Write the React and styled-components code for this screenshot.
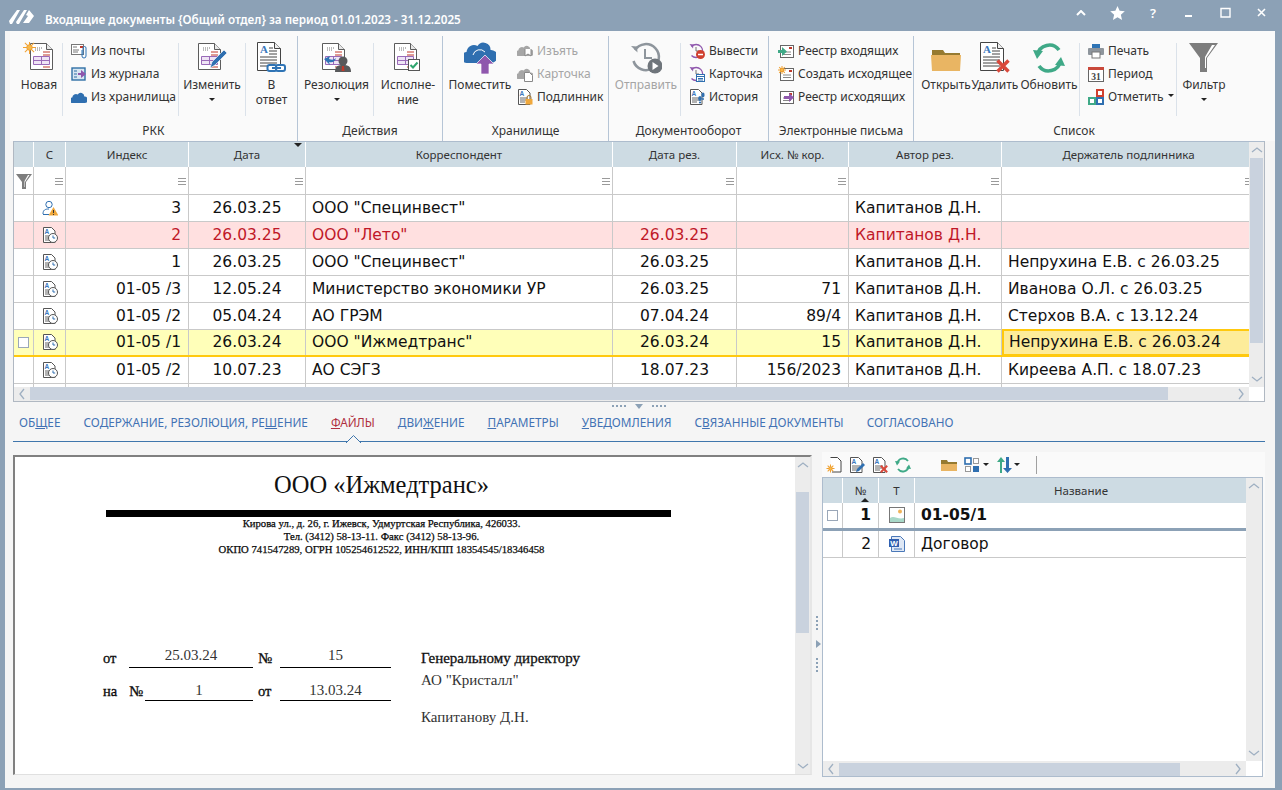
import styled, { createGlobalStyle } from "styled-components";

const Global = createGlobalStyle`
    html, body {
        margin: 0;
        padding: 0;
        background: #8ca1b6;
    }
    * {
        box-sizing: border-box;
    }
`;

const UI_FONT = `"Noto Sans", "Open Sans", sans-serif`;
const GRID_FONT = `"DejaVu Sans", sans-serif`;
const DOC_FONT = `"Liberation Serif", serif`;

/* ---------- icons ---------- */

const Svg = ({ s = 16, children }) => (
    <svg width={s} height={s} viewBox={`0 0 ${s} ${s}`} style={{ display: "block", flex: "none" }}>
        {children}
    </svg>
);

const Sun = ({ x, y, r = 6.5 }) => (
    <g transform={`translate(${x} ${y})`} stroke="#f0a030" strokeWidth="1">
        {[0, 45, 90, 135].map((a) => (
            <line key={a} x1={-r} x2={r} y1="0" y2="0" transform={`rotate(${a})`} />
        ))}
        <circle r={r * 0.42} fill="#f7b84a" stroke="#f0a030" />
    </g>
);

const FormDoc = ({ x = 7, y = 1 }) => (
    <g transform={`translate(${x} ${y})`}>
        <path d="M.5.5h16l6 6v20h-22z" fill="#fff" stroke="#5c5c5c" />
        <path d="M16.5.5v6h6" fill="#e8e8e8" stroke="#5c5c5c" />
        <path d="M5 5h8M5 7h5" stroke="#777" strokeDasharray="1 1" />
        <path d="M13 9h7M13 12h7" stroke="#c0392b" />
        <path d="M3.5 13.5h16v8h-16z" fill="#efe4f5" stroke="#9a6bb8" />
        <path d="M3.5 17.5h16M11.5 13.5v8" stroke="#9a6bb8" />
        <path d="M13 24h7" stroke="#c0392b" />
    </g>
);

const TextDoc = ({ x = 2, y = 1 }) => (
    <g transform={`translate(${x} ${y})`}>
        <path d="M.5.5h17l6 6v22h-23z" fill="#fff" stroke="#444" />
        <path d="M17.5.5v6h6" fill="#eee" stroke="#444" />
        <text x="3" y="11" fontSize="11" fontWeight="700" fontFamily="Liberation Serif" fill="#3a78bd">A</text>
        <path d="M12 6h4M12 9h8M12 12h8M3 15h17M3 18h17M3 21h17M3 24h17" stroke="#444" />
    </g>
);

const SmallA = () => (
    <g>
        <path d="M1.5.5h8l3.5 3.5v11.5h-11.5z" fill="#fff" stroke="#555" />
        <text x="2.5" y="6.5" fontSize="6.5" fontWeight="700" fontFamily="Liberation Sans" fill="#3a78bd">A</text>
        <path d="M3 9h8M3 11h8M3 13h5" stroke="#666" />
    </g>
);

const Cross = ({ x, y, s = 6 }) => (
    <path
        d={`M${x - s} ${y - s}L${x + s} ${y + s}M${x + s} ${y - s}L${x - s} ${y + s}`}
        stroke="#d9483b"
        strokeWidth={s * 0.62}
    />
);

const NewDocIcon = () => (
    <Svg s={32}>
        <FormDoc />
        <Sun x={6.5} y={5.5} />
    </Svg>
);

const EditIcon = () => (
    <Svg s={32}>
        <FormDoc x={2} y={1} />
        <path d="M14 26l2-6L28 8l3 3-12 12z" fill="#2f6fb0" stroke="#fff" strokeWidth=".6" />
    </Svg>
);

const ReplyIcon = () => (
    <Svg s={32}>
        <TextDoc x={1} y={0} />
        <rect x="11.5" y="23" width="9" height="6" rx="2" fill="#fff" stroke="#2f74b5" strokeWidth="2" />
        <rect x="20" y="23" width="9" height="6" rx="2" fill="#fff" stroke="#2f74b5" strokeWidth="2" />
        <path d="M16 26h9" stroke="#2f74b5" strokeWidth="2" />
    </Svg>
);

const ResolutionIcon = () => (
    <Svg s={32}>
        <FormDoc x={1} y={1} />
        <path d="M3 17l6-3-1 3c3 1 5 1 7-1-1 4-4 5-7 4l1 3z" fill="#2f74b5" />
        <circle cx="22" cy="19" r="4.5" fill="#58595b" />
        <path d="M14 30c0-6 3-7 8-7s8 1 8 7z" fill="#58595b" />
        <path d="M21 24h2l.5 5h-3z" fill="#c0392b" />
    </Svg>
);

const ExecIcon = () => (
    <Svg s={32}>
        <FormDoc x={2} y={1} />
        <rect x="16.5" y="17.5" width="11" height="11" fill="#fff" stroke="#555" />
        <path d="M18.5 23l2.5 2.5 4.5-5" fill="none" stroke="#2fa56f" strokeWidth="2" />
    </Svg>
);

const CloudShape = ({ fill }) => (
    <path
        d="M3 28a5.5 5.5 0 0 1-.5-11 7.5 7.5 0 0 1 11-6 7 7 0 0 1 13 4 6 6 0 0 1 1 13z"
        fill={fill}
    />
);

const PutIcon = () => (
    <Svg s={32}>
        <g transform="translate(0 -7)">
            <CloudShape fill="#2f6fb0" />
        </g>
        <path d="M9 13a7 7 0 0 1 12-3" fill="none" stroke="#fff" />
        <path d="M17 32V22h-5l9-9 9 9h-5v10z" fill="#8f57ad" stroke="#fff" strokeWidth=".7" />
    </Svg>
);

const ClockBigIcon = () => (
    <Svg s={32}>
        <path d="M5 8a13 13 0 1 1-1.5 11" fill="none" stroke="#8e959c" strokeWidth="2.5" />
        <path d="M1 4l6 .5.5 6z" fill="#8e959c" />
        <path d="M15 7v9h7" fill="none" stroke="#8e959c" strokeWidth="2" />
        <circle cx="25" cy="24" r="7.5" fill="#6f757b" />
        <path d="M22.5 20l6 4-6 4z" fill="#fff" />
    </Svg>
);

const FolderIcon = () => (
    <Svg s={32}>
        <path d="M2 8h11l2 3h15v6H2z" fill="#967a30" />
        <path d="M1 13h30l-1 16H2z" fill="#e9b563" />
    </Svg>
);

const DeleteIcon = () => (
    <Svg s={32}>
        <TextDoc x={1} y={0} />
        <Cross x={24} y={24} s={5.5} />
    </Svg>
);

const RefreshIcon = ({ s = 32 }) => (
    <svg width={s} height={s} viewBox="0 0 32 32" style={{ display: "block", flex: "none" }}>
        <path d="M4.5 13A12 12 0 0 1 26 8" fill="none" stroke="#3fa987" strokeWidth="3.6" />
        <path d="M27.5 19A12 12 0 0 1 6 24" fill="none" stroke="#3fa987" strokeWidth="3.6" />
        <path d="M0 8l10 1-6 8z" fill="#3fa987" />
        <path d="M32 24l-10-1 6-8z" fill="#3fa987" />
    </svg>
);

const FunnelIcon = () => (
    <Svg s={32}>
        <path d="M1 1h29L19 16v14h-7V16z" fill="#7d7d7d" />
        <path d="M24 3h3L18 16v10h-1V15z" fill="#fff" />
    </Svg>
);

const MailIcon = () => (
    <Svg>
        <rect x=".5" y="1.5" width="12" height="10" fill="#fff" stroke="#777" />
        <path d="M2 4h4M2 7h6M2 9h5" stroke="#777" />
        <rect x="9" y="3" width="3" height="2" fill="#c0392b" />
        <path d="M11 7v6a2 2 0 0 0 4 0V5a1.5 1.5 0 0 0-3 0v7" fill="none" stroke="#2f74b5" />
    </Svg>
);

const JournalIcon = () => (
    <Svg>
        <rect x="1" y="2" width="13" height="12" fill="#d7e6f2" stroke="#2f6fa5" strokeWidth="1.4" />
        <path d="M3 5h3M3 8h3M3 11h3" stroke="#2f6fa5" />
        <path d="M7 7h3V4l5 4-5 4V9H7z" fill="#8f57ad" />
    </Svg>
);

const CloudIcon = ({ fill = "#2f6fb0" }) => (
    <svg width="16" height="16" viewBox="0 0 32 32" style={{ display: "block", flex: "none" }}>
        <CloudShape fill={fill} />
    </svg>
);

const CloudBadgeIcon = ({ children }) => (
    <Svg>
        <g transform="scale(.5) translate(0 -2)">
            <CloudShape fill="#a6a6a6" />
        </g>
        {children}
    </Svg>
);

const LockDocIcon = () => (
    <Svg>
        <SmallA />
        <rect x="8.5" y="10" width="7" height="5.5" fill="#f0a83c" />
        <path d="M10 10V8.5a2 2 0 0 1 4 0V10" fill="none" stroke="#a87a30" />
    </Svg>
);

const HistoryArc = () => (
    <g>
        <path d="M2.5 3.5a6.5 6.5 0 1 1 0 9" fill="none" stroke="#8f57ad" strokeWidth="1.3" />
        <path d="M.5 1l4 .5-.5 4z" fill="#8f57ad" />
        <path d="M7 4v4h3" fill="none" stroke="#777" />
    </g>
);

const WithdrawIcon = () => (
    <Svg>
        <HistoryArc />
        <circle cx="11.5" cy="11.5" r="4.5" fill="#d0402f" />
        <path d="M9 11.5h5" stroke="#fff" strokeWidth="1.5" />
    </Svg>
);

const HistoryCardIcon = () => (
    <Svg>
        <HistoryArc />
        <rect x="7.5" y="8.5" width="8" height="7" fill="#fff" stroke="#2f6fb0" />
        <path d="M7.5 10.5h8M9 12.5h5M9 14h5" stroke="#2f6fb0" />
    </Svg>
);

const StepsIcon = () => (
    <Svg>
        <SmallA />
        <ellipse cx="11" cy="9.5" rx="1.8" ry="2.6" fill="#2f6fb0" />
        <ellipse cx="14" cy="6" rx="1.6" ry="2.4" fill="#2f6fb0" />
        <circle cx="11" cy="13.5" r="1.1" fill="#2f6fb0" />
        <circle cx="14" cy="10" r="1" fill="#2f6fb0" />
    </Svg>
);

const MailBase = () => (
    <g>
        <rect x="2.5" y="2.5" width="13" height="12" fill="#fff" stroke="#666" />
        <rect x="11" y="4" width="3" height="2" fill="#c0392b" />
        <path d="M5 9h8M5 11.5h8" stroke="#888" />
    </g>
);

const InboxIcon = () => (
    <Svg>
        <MailBase />
        <path d="M0 7h4V4l5 4.5L4 13v-3H0z" fill="#3fa987" />
    </Svg>
);

const CreateMailIcon = () => (
    <Svg>
        <MailBase />
        <Sun x={4} y={4} r={4} />
    </Svg>
);

const OutboxIcon = () => (
    <Svg>
        <MailBase />
        <path d="M6 7h5V4l5 4.5L11 13v-3H6z" fill="#8f57ad" />
    </Svg>
);

const PrintIcon = () => (
    <Svg>
        <rect x="4" y="1" width="8" height="4" fill="#2f74b5" />
        <rect x="0" y="5" width="16" height="7" rx="1" fill="#8e959c" />
        <rect x="4" y="9" width="8" height="6" fill="#fff" stroke="#777" />
    </Svg>
);

const CalendarIcon = () => (
    <Svg>
        <rect x=".5" y="2.5" width="15" height="13" fill="#fff" stroke="#666" />
        <rect x="0" y="1" width="16" height="3" fill="#c9483a" />
        <text x="8" y="14" textAnchor="middle" fontSize="9.5" fontWeight="700" fontFamily="Liberation Serif" fill="#444">31</text>
    </Svg>
);

const MarkIcon = () => (
    <Svg>
        <rect x="9" y="1" width="6" height="6" fill="#fff" stroke="#d0402f" strokeWidth="2" />
        <rect x="1" y="9" width="6" height="6" fill="#fff" stroke="#3fa987" strokeWidth="2" />
        <rect x="9" y="9" width="6" height="6" fill="#fff" stroke="#2f6fb0" strokeWidth="2" />
    </Svg>
);

const DocClockIcon = () => (
    <Svg>
        <SmallA />
        <circle cx="11" cy="11" r="4.5" fill="#fff" stroke="#555" />
        <path d="M11 8.5V11h2.2" fill="none" stroke="#2f6fb0" />
    </Svg>
);

const PersonWarnIcon = () => (
    <Svg>
        <circle cx="7" cy="4.5" r="3.2" fill="#fff" stroke="#2f6fb0" />
        <path d="M1 14c0-4 2-5 6-5" fill="none" stroke="#2f6fb0" />
        <path d="M1 14.5h6" stroke="#2f6fb0" />
        <path d="M11.5 7l5 8.5h-10z" fill="#f0a83c" />
        <path d="M11.5 10v3M11.5 14v1" stroke="#333" />
    </Svg>
);

const ImageFileIcon = () => (
    <Svg>
        <rect x=".5" y=".5" width="15" height="15" fill="#fff" stroke="#777" />
        <path d="M1 15v-4c4-3 8 2 14 0v4z" fill="#a8d8c8" />
        <circle cx="11" cy="4.5" r="2" fill="#f0b45a" />
    </Svg>
);

const WordFileIcon = () => (
    <Svg>
        <path d="M2.5.5h9l4 4v11h-13z" fill="#dfe8f5" stroke="#4a78b8" />
        <rect x="0" y="3" width="10" height="8" fill="#2f5fb0" />
        <text x="5" y="10" textAnchor="middle" fontSize="8" fontWeight="700" fontFamily="Liberation Sans" fill="#fff">W</text>
        <path d="M5 13h8" stroke="#4a78b8" />
    </Svg>
);

const TbNewIcon = () => (
    <Svg>
        <path d="M4.5.5h7l3.5 3.5v11H6" fill="#fff" stroke="#444" />
        <Sun x={4.5} y={11.5} r={4} />
    </Svg>
);

const TbEditIcon = () => (
    <Svg>
        <SmallA />
        <path d="M7 15l1-3 6-6 2 2-6 6z" fill="#2f6fb0" />
    </Svg>
);

const TbDeleteIcon = () => (
    <Svg>
        <SmallA />
        <Cross x={12} y={12} s={3.2} />
    </Svg>
);

const TbFolderIcon = () => (
    <Svg>
        <path d="M0 3h6l1 2h9v3H0z" fill="#967a30" />
        <path d="M0 7h16v7H0z" fill="#e9b563" />
    </Svg>
);

const TbGridIcon = () => (
    <Svg>
        <rect x="1" y="1" width="6" height="6" fill="#fff" stroke="#2f6fb0" strokeWidth="1.6" />
        <rect x="9.5" y="1.5" width="5" height="5" fill="#fff" stroke="#999" />
        <rect x="1.5" y="9.5" width="5" height="5" fill="#fff" stroke="#999" />
        <rect x="9" y="9" width="6" height="6" fill="#2f6fb0" />
    </Svg>
);

const TbSortIcon = () => (
    <Svg>
        <path d="M4 16V5H1l4-5 4 5H6v11z" fill="#3fa987" />
        <path d="M10 0v11H7l4.500 5 4.500-5h-3V0z" fill="#2f6fb0" />
    </Svg>
);

const SmallFunnel = () => (
    <Svg>
        <path d="M0 1h16L10 9v7H6V9z" fill="#7d7d7d" />
        <path d="M12 2h1.500L9 9v5H8.500V8z" fill="#fff" />
    </Svg>
);

/* ---------- window ---------- */

const Window = styled.div`
    width: 1282px;
    height: 790px;
    overflow: hidden;
    background: #8ca1b6;
    display: flex;
    flex-direction: column;
    font-family: ${UI_FONT};
`;

const TitleBar = styled.div`
    height: 31px;
    flex: none;
    display: flex;
    align-items: center;
    padding: 7px 3px 0 9px;
    color: #fff;
`;

const Title = styled.div`
    margin-left: 11px;
    font-size: 11.7px;
    font-weight: 600;
    flex: 1;
    white-space: nowrap;
`;

const WinButton = styled.div`
    width: 36px;
    height: 24px;
    margin-top: -13px;
    display: flex;
    align-items: center;
    justify-content: center;
    color: #fff;
    font-size: 13px;
    font-weight: 600;
`;

const Body = styled.div`
    width: 1270px;
    height: 757px;
    margin-left: 5px;
    background: #f5f5f5;
    display: flex;
    flex-direction: column;
`;

/* ---------- ribbon ---------- */

const Ribbon = styled.div`
    height: 110px;
    flex: none;
    margin-left: 5px;
    padding-top: 5px;
    background: #fafafa;
    display: flex;
    align-items: flex-start;
`;

const Group = styled.div`
    width: ${(p) => p.$w}px;
    height: 105px;
    flex: none;
    display: flex;
    flex-direction: column;
    border-right: ${(p) => (p.$last ? "none" : "1px solid #b6c5d6")};
`;

const GroupItems = styled.div`
    height: 85px;
    display: flex;
    align-items: flex-start;
    padding-left: ${(p) => p.$pad || 0}px;
`;

const GroupLabel = styled.div`
    height: 20px;
    line-height: 19px;
    text-align: center;
    font-size: 12px;
    color: #333;
`;

const InnerSep = styled.div`
    width: 1px;
    height: 73px;
    margin-top: 7px;
    flex: none;
    background: #dbe2ea;
`;

const LargeBtn = styled.div`
    width: ${(p) => p.$w}px;
    flex: none;
    padding-top: 6px;
    display: flex;
    flex-direction: column;
    align-items: center;
    font-size: 12px;
    line-height: 15px;
    text-align: center;
    color: ${(p) => (p.$off ? "#a5a5a5" : "#333")};
    white-space: pre-line;
`;

const LargeLabel = styled.div`
    margin-top: 3px;
`;

const Caret = styled.div`
    width: 0;
    height: 0;
    border-left: 3px solid transparent;
    border-right: 3px solid transparent;
    border-top: 3px solid #222;
    margin: ${(p) => p.$m || "6px 0 0"};
    flex: none;
`;

const SmallCol = styled.div`
    width: ${(p) => p.$w}px;
    flex: none;
    padding: 3px 0 0 ${(p) => p.$pad || 0}px;
    display: flex;
    flex-direction: column;
`;

const SmallBtn = styled.div`
    height: 23px;
    display: flex;
    align-items: center;
    gap: 4px;
    font-size: 12px;
    color: ${(p) => (p.$off ? "#a5a5a5" : "#333")};
    white-space: nowrap;
`;

/* ---------- grid ---------- */

const Workspace = styled.div`
    flex: 1;
    padding: 0 10px 0 8px;
    display: flex;
    flex-direction: column;
`;

const MainGrid = styled.div`
    height: 261px;
    flex: none;
    border: 1px solid #adbccd;
    border-color: #adbccd #b0b8c2 #b0b8c2 #b0b8c2;
    background: #fff;
    display: flex;
`;

const GridArea = styled.div`
    width: ${(p) => p.$w}px;
    flex: none;
    display: flex;
    flex-direction: column;
    overflow: hidden;
`;

const GridRows = styled.div`
    flex: 1;
    min-height: 0;
    overflow: hidden;
`;

const Row = styled.div`
    display: flex;
    height: ${(p) => p.$h || 27}px;
    width: 1300px;
    background: ${(p) => p.$bg || "#fff"};
    color: ${(p) => p.$color || "#111"};
    font-family: ${GRID_FONT};
    font-size: 15.5px;
    border-bottom: ${(p) => p.$line || "1px solid #c9c9c9"};
`;

const Cell = styled.div`
    width: ${(p) => p.$w}px;
    flex: none;
    height: ${(p) => (p.$active ? "calc(100% + 2px)" : "100%")};
    border-right: 1px solid #c9c9c9;
    padding: 0 ${(p) => (p.$a === "right" ? 7 : 6)}px;
    padding-bottom: 1px;
    display: flex;
    align-items: center;
    white-space: nowrap;
    overflow: hidden;
    justify-content: ${(p) =>
        p.$a === "right" ? "flex-end" : p.$a === "center" ? "center" : "flex-start"};
    font-weight: ${(p) => (p.$bold ? 700 : 400)};
    ${(p) => p.$active && "background: #fdec9a; border: 2px solid #ffc90e; padding-left: 5px; margin-top: -1px;"}
`;

const HeaderRow = styled.div`
    display: flex;
    height: 25px;
    width: 1300px;
    flex: none;
    background: #cddbe3;
`;

const HeaderCell = styled.div`
    width: ${(p) => p.$w}px;
    flex: none;
    position: relative;
    border-right: 1px solid #fff;
    display: flex;
    align-items: center;
    justify-content: center;
    font-size: 11.5px;
    color: #333;
`;

const SortMark = styled.div`
    position: absolute;
    right: 3px;
    ${(p) => (p.$up ? "bottom: 1px; border-bottom: 4px solid #222;" : "top: 1px; border-top: 4px solid #222;")}
    ${(p) => p.$up && "right: 9px;"}
    border-left: 4px solid transparent;
    border-right: 4px solid transparent;
`;

const FilterMenu = styled.div`
    position: absolute;
    right: 2px;
    top: 11px;
    width: 8px;
    height: 7px;
    border-top: 1px solid #9a9a9a;
    border-bottom: 1px solid #9a9a9a;
    &::after {
        content: "";
        display: block;
        height: 1px;
        margin-top: 2px;
        background: #9a9a9a;
    }
`;

const FilterCell = styled(Cell)`
    position: relative;
    padding: 0;
    justify-content: center;
`;

const CheckBox = styled.div`
    width: 11px;
    height: 11px;
    border: 1px solid #9aa7b8;
    background: #fff;
`;

const HScroll = styled.div`
    height: ${(p) => p.$h || 14}px;
    flex: none;
    background: #ececec;
    display: flex;
    align-items: stretch;
`;

const ArrowBox = styled.div`
    width: ${(p) => p.$w || 16}px;
    height: ${(p) => p.$h || "auto"};
    flex: none;
    display: flex;
    align-items: center;
    justify-content: center;
`;

const HThumb = styled.div`
    width: ${(p) => p.$w}px;
    flex: none;
    margin-bottom: ${(p) => p.$mb || 0}px;
    margin-top: ${(p) => p.$mt || 0}px;
    background: #c9d2de;
`;

const Filler = styled.div`
    flex: 1;
`;

const VScroll = styled.div`
    width: ${(p) => p.$w || 15}px;
    flex: none;
    display: flex;
    flex-direction: column;
    background: ${(p) => p.$bg || "#fff"};
`;

const VTrack = styled.div`
    flex: 1;
    min-height: 0;
    background: #ececec;
    display: flex;
    flex-direction: column;
    align-items: center;
`;

const VThumb = styled.div`
    width: 13px;
    height: ${(p) => p.$h}px;
    flex: none;
    margin-top: ${(p) => p.$top || 0}px;
    background: #c9d2de;
`;

const Corner = styled.div`
    height: ${(p) => p.$h}px;
    flex: none;
    background: #fff;
`;

const Chevron = ({ dir }) => {
    const d = {
        up: "M1 6l5-4 5 4",
        down: "M1 2l5 4 5-4",
        left: "M6 1L2 6l4 5",
        right: "M2 1l4 5-4 5",
    }[dir];
    const horizontal = dir === "left" || dir === "right";
    return (
        <svg width={horizontal ? 8 : 12} height={horizontal ? 12 : 8} viewBox={horizontal ? "0 0 8 12" : "0 0 12 8"}>
            <path d={d} fill="none" stroke="#9fb0c2" strokeWidth="1.3" />
        </svg>
    );
};

/* ---------- splitters, tabs ---------- */

const HSplitter = styled.div`
    height: 8px;
    flex: none;
    display: flex;
    align-items: center;
    justify-content: center;
    gap: 9px;
`;

const Dots = styled.div`
    display: flex;
    flex-direction: ${(p) => (p.$v ? "column" : "row")};
    gap: 2px;
`;

const Dot = styled.div`
    width: 2px;
    height: 2px;
    background: #8ca1b6;
`;

const DownArrow = styled.div`
    border-left: 4px solid transparent;
    border-right: 4px solid transparent;
    border-top: 5px solid #8ca1b6;
`;

const RightArrow = styled.div`
    border-top: 4px solid transparent;
    border-bottom: 4px solid transparent;
    border-left: 5px solid #8ca1b6;
`;

const Tabs = styled.div`
    height: 32px;
    flex: none;
    position: relative;
    display: flex;
    gap: 23px;
    padding: 4px 0 0 6px;
    border-bottom: 1px solid #3f76ac;
`;

const Tab = styled.div`
    font-size: 11.8px;
    line-height: 17px;
    white-space: nowrap;
    position: relative;
    color: ${(p) => (p.$on ? "#b03040" : "#4272b4")};
    u {
        text-decoration-thickness: 1px;
    }
`;

const Notch = styled.div`
    position: absolute;
    left: 50%;
    margin-left: -7px;
    top: 21px;
    width: 15px;
    height: 8px;
    svg {
        display: block;
    }
`;

/* ---------- lower part ---------- */

const Lower = styled.div`
    height: 325px;
    margin-top: 10px;
    flex: none;
    display: flex;
    align-items: flex-start;
`;

const Preview = styled.div`
    width: 799px;
    height: 320px;
    margin-top: 3px;
    flex: none;
    display: flex;
    background: #fff;
    border-top: 2px solid #808080;
    border-left: 2px solid #808080;
    border-right: 2px solid #e6e6e6;
    border-bottom: 1px solid #e0e0e0;
`;

const Page = styled.div`
    flex: 1;
    overflow: hidden;
    padding: 14px 0 0 91px;
    font-family: ${DOC_FONT};
    color: #111;
`;

const Sheet = styled.div`
    width: 565px;
`;

const Company = styled.div`
    font-size: 24.5px;
    line-height: 28px;
    text-align: center;
    padding-right: 14px;
    white-space: nowrap;
`;

const BlackBar = styled.div`
    height: 7px;
    margin-top: 11px;
    background: #000;
`;

const Address = styled.div`
    padding-right: 14px;
    font-size: 10.7px;
    line-height: 13px;
    text-align: center;
    white-space: nowrap;
    -webkit-text-stroke: 0.25px #000;
`;

const FormArea = styled.div`
    margin: 79px 0 0 -3px;
    display: flex;
`;

const FormFields = styled.div`
    display: flex;
    flex-direction: column;
    flex: none;
`;

const FormRow = styled.div`
    height: 33px;
    display: flex;
    align-items: flex-end;
`;

const FormLabel = styled.div`
    width: ${(p) => p.$w}px;
    flex: none;
    font-size: 14.5px;
    line-height: 20px;
    padding-bottom: ${(p) => (p.$low ? 0 : 0)}px;
    -webkit-text-stroke: 0.3px #000;
`;

const FormValue = styled.div`
    width: ${(p) => p.$w}px;
    margin-right: ${(p) => p.$mr || 0}px;
    flex: none;
    border-bottom: 1px solid #000;
    text-align: center;
    font-size: 15px;
    line-height: ${(p) => p.$lh || 20}px;
    padding-bottom: ${(p) => p.$pb || 0}px;
    color: #333;
`;

const Addressee = styled.div`
    margin: 12px 0 0 30px;
    font-size: 15px;
    line-height: 22px;
    color: #333;
    white-space: nowrap;
`;

const AddresseeTitle = styled.div`
    color: #111;
    -webkit-text-stroke: 0.3px #111;
`;

const AddresseeName = styled.div`
    margin-top: 15px;
`;

const VSplitter = styled.div`
    width: 10px;
    flex: none;
    padding: 164px 0 0 4px;
    display: flex;
    flex-direction: column;
    align-items: flex-start;
    gap: 10px;
`;

const RightPanel = styled.div`
    flex: 1;
    min-width: 0;
    height: 325px;
    background: #fafafa;
    display: flex;
    flex-direction: column;
`;

const Toolbar = styled.div`
    height: 25px;
    flex: none;
    display: flex;
    align-items: center;
    padding-left: 4px;
`;

const ToolIcon = styled.div`
    margin-right: ${(p) => p.$mr ?? 8}px;
    display: flex;
    align-items: center;
`;

const ToolSep = styled.div`
    width: 1px;
    height: 18px;
    background: #a0a0a0;
    margin-left: 9px;
`;

const FilesGrid = styled.div`
    width: 441px;
    height: 300px;
    flex: none;
    border: 1px solid #adbccd;
    background: #fff;
    display: flex;
`;

const FileRow = styled(Row)`
    width: 100%;
    height: ${(p) => p.$h}px;
`;

const RowsFill = styled.div`
    flex: 1;
    background: #fff;
`;

const columns = [
    { w: 20 },
    { w: 32, title: "С", a: "center" },
    { w: 123, title: "Индекс", a: "right" },
    { w: 117, title: "Дата", a: "center" },
    { w: 307, title: "Корреспондент" },
    { w: 124, title: "Дата рез.", a: "center" },
    { w: 112, title: "Исх. № кор.", a: "right" },
    { w: 153, title: "Автор рез." },
    { w: 254, title: "Держатель подлинника" },
];

const rows = [
    { warn: true, cells: ["3", "26.03.25", 'ООО "Специнвест"', "", "", "Капитанов Д.Н.", ""] },
    { pink: true, cells: ["2", "26.03.25", 'ООО "Лето"', "26.03.25", "", "Капитанов Д.Н.", ""] },
    { cells: ["1", "26.03.25", 'ООО "Специнвест"', "26.03.25", "", "Капитанов Д.Н.", "Непрухина Е.В. с 26.03.25"] },
    { cells: ["01-05 /3", "12.05.24", "Министерство экономики УР", "26.03.25", "71", "Капитанов Д.Н.", "Иванова О.Л. с 26.03.25"] },
    { cells: ["01-05 /2", "05.04.24", "АО ГРЭМ", "07.04.24", "89/4", "Капитанов Д.Н.", "Стерхов В.А. с 13.12.24"] },
    { active: true, cells: ["01-05 /1", "26.03.24", 'ООО "Ижмедтранс"', "26.03.24", "15", "Капитанов Д.Н.", "Непрухина Е.В. с 26.03.24"] },
    { cells: ["01-05 /2", "10.07.23", "АО СЭГЗ", "18.07.23", "156/2023", "Капитанов Д.Н.", "Киреева А.П. с 18.07.23"] },
];

const tabs = [
    ["ОБ", "Щ", "ЕЕ"],
    ["СОДЕРЖАНИЕ, РЕЗОЛЮЦИЯ, РЕ", "Ш", "ЕНИЕ"],
    ["", "Ф", "АЙЛЫ"],
    ["ДВИ", "Ж", "ЕНИЕ"],
    ["", "П", "АРАМЕТРЫ"],
    ["", "У", "ВЕДОМЛЕНИЯ"],
    ["С", "В", "ЯЗАННЫЕ ДОКУМЕНТЫ"],
    ["СОГЛАСОВАНО", "", ""],
];

const Large = ({ w, icon, label, off, caret }) => (
    <LargeBtn $w={w} $off={off}>
        {icon}
        <LargeLabel>{label}</LargeLabel>
        {caret && <Caret />}
    </LargeBtn>
);

const Small = ({ icon, label, off, caret }) => (
    <SmallBtn $off={off}>
        {icon}
        {label}
        {caret && <Caret $m="-3px 0 0" />}
    </SmallBtn>
);

function MainRibbon() {
    return (
        <Ribbon>
            <Group $w={288}>
                <GroupItems $pad={6}>
                    <Large w={46} icon={<NewDocIcon />} label="Новая" />
                    <InnerSep />
                    <SmallCol $w={115} $pad={8}>
                        <Small icon={<MailIcon />} label="Из почты" />
                        <Small icon={<JournalIcon />} label="Из журнала" />
                        <Small icon={<CloudIcon />} label="Из хранилища" />
                    </SmallCol>
                    <InnerSep />
                    <Large w={66} icon={<EditIcon />} label="Изменить" caret />
                    <InnerSep />
                    <Large w={51} icon={<ReplyIcon />} label={"В\nответ"} />
                </GroupItems>
                <GroupLabel>РКК</GroupLabel>
            </Group>
            <Group $w={145}>
                <GroupItems $pad={2}>
                    <Large w={73} icon={<ResolutionIcon />} label="Резолюция" caret />
                    <InnerSep />
                    <Large w={68} icon={<ExecIcon />} label={"Исполне-\nние"} />
                </GroupItems>
                <GroupLabel>Действия</GroupLabel>
            </Group>
            <Group $w={166}>
                <GroupItems>
                    <Large w={74} icon={<PutIcon />} label="Поместить" />
                    <SmallCol $w={90}>
                        <Small
                            off
                            icon={
                                <CloudBadgeIcon>
                                    <path d="M8 6v7l3-2 3 2V6" fill="#fff" stroke="#888" />
                                </CloudBadgeIcon>
                            }
                            label="Изъять"
                        />
                        <Small
                            off
                            icon={
                                <CloudBadgeIcon>
                                    <path d="M7.500 6.500h5l3 3v6h-8z" fill="#fff" stroke="#888" />
                                </CloudBadgeIcon>
                            }
                            label="Карточка"
                        />
                        <Small icon={<LockDocIcon />} label="Подлинник" />
                    </SmallCol>
                </GroupItems>
                <GroupLabel>Хранилище</GroupLabel>
            </Group>
            <Group $w={160}>
                <GroupItems $pad={3}>
                    <Large w={68} off icon={<ClockBigIcon />} label="Отправить" />
                    <InnerSep />
                    <SmallCol $w={80} $pad={8}>
                        <Small icon={<WithdrawIcon />} label="Вывести" />
                        <Small icon={<HistoryCardIcon />} label="Карточка" />
                        <Small icon={<StepsIcon />} label="История" />
                    </SmallCol>
                </GroupItems>
                <GroupLabel>Документооборот</GroupLabel>
            </Group>
            <Group $w={145}>
                <GroupItems $pad={9}>
                    <SmallCol $w={134}>
                        <Small icon={<InboxIcon />} label="Реестр входящих" />
                        <Small icon={<CreateMailIcon />} label="Создать исходящее" />
                        <Small icon={<OutboxIcon />} label="Реестр исходящих" />
                    </SmallCol>
                </GroupItems>
                <GroupLabel>Электронные письма</GroupLabel>
            </Group>
            <Group $w={320} $last>
                <GroupItems $pad={7}>
                    <Large w={50} icon={<FolderIcon />} label="Открыть" />
                    <Large w={48} icon={<DeleteIcon />} label="Удалить" />
                    <Large w={60} icon={<RefreshIcon />} label="Обновить" />
                    <InnerSep />
                    <SmallCol $w={96} $pad={8}>
                        <Small icon={<PrintIcon />} label="Печать" />
                        <Small icon={<CalendarIcon />} label="Период" />
                        <Small icon={<MarkIcon />} label="Отметить" caret />
                    </SmallCol>
                    <InnerSep />
                    <Large w={54} icon={<FunnelIcon />} label="Фильтр" caret />
                </GroupItems>
                <GroupLabel>Список</GroupLabel>
            </Group>
        </Ribbon>
    );
}

function DocGrid() {
    return (
        <MainGrid>
            <GridArea $w={1235}>
                <HeaderRow>
                    {columns.map((c, i) => (
                        <HeaderCell key={i} $w={c.w}>
                            {c.title}
                            {c.title === "Дата" && <SortMark />}
                        </HeaderCell>
                    ))}
                </HeaderRow>
                <Row $h={28}>
                    {columns.map((c, i) => (
                        <FilterCell key={i} $w={c.w}>
                            {i === 0 ? <SmallFunnel /> : <FilterMenu />}
                        </FilterCell>
                    ))}
                </Row>
                <GridRows>
                    {rows.map((r, idx) => (
                        <Row
                            key={idx}
                            $bg={r.pink ? "#ffe0e0" : r.active ? "#ffffb9" : "#fff"}
                            $color={r.pink ? "#c01828" : undefined}
                            $line={r.active ? "2px solid #ffc90e" : undefined}
                        >
                            <Cell $w={columns[0].w} $a="center" style={{ padding: 0 }}>
                                {r.active && <CheckBox />}
                            </Cell>
                            <Cell $w={columns[1].w} $a="center">
                                {r.warn ? <PersonWarnIcon /> : <DocClockIcon />}
                            </Cell>
                            {r.cells.map((text, i) => (
                                <Cell
                                    key={i}
                                    $w={columns[i + 2].w}
                                    $a={columns[i + 2].a}
                                    $active={r.active && i === 6}
                                >
                                    {text}
                                </Cell>
                            ))}
                        </Row>
                    ))}
                    <Row $h={4} $line="none">
                        {columns.map((c, i) => (
                            <Cell key={i} $w={c.w} />
                        ))}
                    </Row>
                </GridRows>
                <HScroll>
                    <ArrowBox>
                        <Chevron dir="left" />
                    </ArrowBox>
                    <HThumb $w={1138} $mb={1} />
                    <Filler />
                    <ArrowBox $w={81} style={{ justifyContent: "flex-end", paddingRight: 4 }}>
                        <Chevron dir="right" />
                    </ArrowBox>
                </HScroll>
            </GridArea>
            <VScroll>
                <VTrack>
                    <ArrowBox $h="16px">
                        <Chevron dir="up" />
                    </ArrowBox>
                    <VThumb $h={185} />
                    <Filler />
                    <ArrowBox $h="16px">
                        <Chevron dir="down" />
                    </ArrowBox>
                </VTrack>
                <Corner $h={14} />
            </VScroll>
        </MainGrid>
    );
}

function DocPreview() {
    return (
        <Preview>
            <Page>
                <Sheet>
                    <Company>ООО «Ижмедтранс»</Company>
                    <BlackBar />
                    <Address>
                        Кирова ул., д. 26, г. Ижевск, Удмуртская Республика, 426033.
                        <br />
                        Тел. (3412) 58-13-11. Факс (3412) 58-13-96.
                        <br />
                        ОКПО 741547289, ОГРН 105254612522, ИНН/КПП 18354545/18346458
                    </Address>
                    <FormArea>
                        <FormFields>
                            <FormRow>
                                <FormLabel $w={26}>от</FormLabel>
                                <FormValue $w={124} $mr={5} $pb={2}>25.03.24</FormValue>
                                <FormLabel $w={22}>№</FormLabel>
                                <FormValue $w={111} $pb={2}>15</FormValue>
                            </FormRow>
                            <FormRow>
                                <FormLabel $w={26}>на</FormLabel>
                                <FormLabel $w={16}>№</FormLabel>
                                <FormValue $w={108} $mr={5}>1</FormValue>
                                <FormLabel $w={22}>от</FormLabel>
                                <FormValue $w={111}>13.03.24</FormValue>
                            </FormRow>
                        </FormFields>
                        <Addressee>
                            <AddresseeTitle>Генеральному директору</AddresseeTitle>
                            <div>АО "Кристалл"</div>
                            <AddresseeName>Капитанову Д.Н.</AddresseeName>
                        </Addressee>
                    </FormArea>
                </Sheet>
            </Page>
            <VScroll $w={15}>
                <VTrack>
                    <ArrowBox $h="16px">
                        <Chevron dir="up" />
                    </ArrowBox>
                    <VThumb $h={141} $top={19} />
                    <Filler />
                    <ArrowBox $h="16px">
                        <Chevron dir="down" />
                    </ArrowBox>
                </VTrack>
            </VScroll>
        </Preview>
    );
}

const fileCols = [20, 36, 36, 332];

function FilesPanel() {
    return (
        <RightPanel>
            <Toolbar>
                <ToolIcon $mr={7}><TbNewIcon /></ToolIcon>
                <ToolIcon $mr={7}><TbEditIcon /></ToolIcon>
                <ToolIcon $mr={7}><TbDeleteIcon /></ToolIcon>
                <ToolIcon $mr={30}><RefreshIcon s={16} /></ToolIcon>
                <ToolIcon $mr={7}><TbFolderIcon /></ToolIcon>
                <ToolIcon $mr={7}><TbGridIcon /><Caret $m="0 0 0 3px" /></ToolIcon>
                <ToolIcon $mr={7}><TbSortIcon /><Caret $m="0 0 0 2px" /></ToolIcon>
                <ToolSep />
            </Toolbar>
            <FilesGrid>
                <GridArea $w={423}>
                    <HeaderRow style={{ width: "100%" }}>
                        <HeaderCell $w={fileCols[0]} />
                        <HeaderCell $w={fileCols[1]}>
                            №
                            <SortMark $up />
                        </HeaderCell>
                        <HeaderCell $w={fileCols[2]}>Т</HeaderCell>
                        <HeaderCell $w={fileCols[3]} style={{ borderRight: "none" }}>Название</HeaderCell>
                    </HeaderRow>
                    <FileRow $h={28} $line="3px solid #8ca1b6">
                        <Cell $w={fileCols[0]} $a="center" style={{ padding: 0 }}><CheckBox /></Cell>
                        <Cell $w={fileCols[1]} $a="right" $bold>1</Cell>
                        <Cell $w={fileCols[2]} $a="center"><ImageFileIcon /></Cell>
                        <Cell $w={fileCols[3]} $bold>01-05/1</Cell>
                    </FileRow>
                    <FileRow $h={27}>
                        <Cell $w={fileCols[0]} />
                        <Cell $w={fileCols[1]} $a="right">2</Cell>
                        <Cell $w={fileCols[2]} $a="center"><WordFileIcon /></Cell>
                        <Cell $w={fileCols[3]}>Договор</Cell>
                    </FileRow>
                    <RowsFill />
                    <HScroll $h={15}>
                        <ArrowBox>
                            <Chevron dir="left" />
                        </ArrowBox>
                        <HThumb $w={341} $mt={2} />
                        <Filler />
                        <ArrowBox $w={24} style={{ justifyContent: "flex-end", paddingRight: 4 }}>
                            <Chevron dir="right" />
                        </ArrowBox>
                    </HScroll>
                </GridArea>
                <VScroll $w={16}>
                    <VTrack>
                        <ArrowBox $h="16px">
                            <Chevron dir="up" />
                        </ArrowBox>
                        <Filler />
                        <ArrowBox $h="16px">
                            <Chevron dir="down" />
                        </ArrowBox>
                    </VTrack>
                    <Corner $h={15} />
                </VScroll>
            </FilesGrid>
        </RightPanel>
    );
}

const fourDots = [0, 1, 2, 3];

function App() {
    return (
        <Window>
            <Global />
            <TitleBar>
                <svg width="25" height="15" viewBox="0 0 25 15" style={{ flex: "none", marginTop: -5 }}>
                    <path d="M0 12L8 1h3L3 15H1zM7 13L15 1h3L10 15H8zM17 6l3-5 5 6-5 7h-6l5-7z" fill="#fff" />
                </svg>
                <Title>Входящие документы {"{"}Общий отдел{"}"} за период 01.01.2023 - 31.12.2025</Title>
                <WinButton>
                    <svg width="10" height="6" viewBox="0 0 10 6">
                        <path d="M1 5l4-4 4 4" fill="none" stroke="#fff" strokeWidth="2" />
                    </svg>
                </WinButton>
                <WinButton>
                    <svg width="15" height="14" viewBox="0 0 24 23">
                        <path d="M12 0l3.500 8 8.500.8-6.500 5.700 2 8.500L12 18.500 4.500 23l2-8.500L0 8.800 8.500 8z" fill="#fff" />
                    </svg>
                </WinButton>
                <WinButton>?</WinButton>
                <WinButton>
                    <svg width="10" height="10" viewBox="0 0 10 10">
                        <path d="M1 7h7v2H1z" fill="#fff" />
                    </svg>
                </WinButton>
                <WinButton>
                    <svg width="11" height="11" viewBox="0 0 11 11">
                        <path d="M1 1.500h9v8.500H1z" fill="none" stroke="#fff" strokeWidth="1.4" />
                    </svg>
                </WinButton>
                <WinButton>
                    <svg width="9" height="9" viewBox="0 0 9 9">
                        <path d="M1 1l7 7M8 1L1 8" stroke="#fff" strokeWidth="1.6" />
                    </svg>
                </WinButton>
            </TitleBar>
            <Body>
                <MainRibbon />
                <Workspace>
                    <DocGrid />
                    <HSplitter>
                        <Dots>{fourDots.map((d) => <Dot key={d} />)}</Dots>
                        <DownArrow />
                        <Dots>{fourDots.map((d) => <Dot key={d} />)}</Dots>
                    </HSplitter>
                    <Tabs>
                        {tabs.map(([a, b, c], i) => (
                            <Tab key={i} $on={i === 2}>
                                {a}
                                {b && <u>{b}</u>}
                                {c}
                                {i === 2 && (
                                    <Notch>
                                        <svg width="15" height="8" viewBox="0 0 15 8">
                                            <path d="M0 8l7.500-7.500L15 8" fill="#f5f5f5" stroke="#3f76ac" />
                                        </svg>
                                    </Notch>
                                )}
                            </Tab>
                        ))}
                    </Tabs>
                    <Lower>
                        <DocPreview />
                        <VSplitter>
                            <Dots $v>{fourDots.map((d) => <Dot key={d} />)}</Dots>
                            <RightArrow />
                            <Dots $v>{fourDots.map((d) => <Dot key={d} />)}</Dots>
                        </VSplitter>
                        <FilesPanel />
                    </Lower>
                </Workspace>
            </Body>
        </Window>
    );
}

export default App;
